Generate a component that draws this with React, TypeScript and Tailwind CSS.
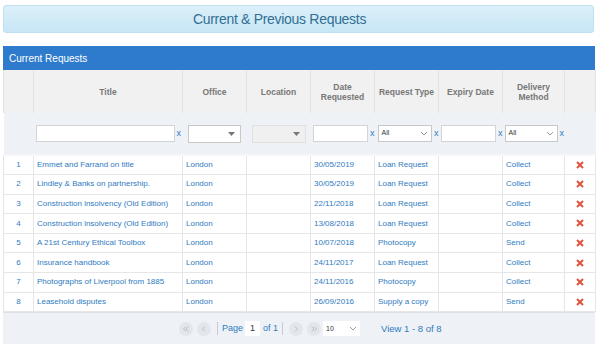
import React from 'react';

const rows = [
  ['Emmet and Farrand on title', '30/05/2019', 'Loan Request', 'Collect'],
  ['Lindley & Banks on partnership.', '30/05/2019', 'Loan Request', 'Collect'],
  ['Construction insolvency (Old Edition)', '22/11/2018', 'Loan Request', 'Collect'],
  ['Construction insolvency (Old Edition)', '13/08/2018', 'Loan Request', 'Collect'],
  ['A 21st Century Ethical Toolbox', '10/07/2018', 'Photocopy', 'Send'],
  ['Insurance handbook', '24/11/2017', 'Loan Request', 'Collect'],
  ['Photographs of Liverpool from 1885', '24/11/2016', 'Photocopy', 'Collect'],
  ['Leasehold disputes', '26/09/2016', 'Supply a copy', 'Send'],
];

const Chevron = () => (
  <svg width="8" height="5" viewBox="0 0 8 5" className="shrink-0">
    <path d="M1 1l3 3 3-3" fill="none" stroke="#999" strokeWidth="1" />
  </svg>
);

const Caret = () => (
  <svg width="7" height="4" viewBox="0 0 7 4" className="shrink-0">
    <path d="M0 0h7L3.5 4z" fill="#777" />
  </svg>
);

const X = () => <span className="text-[9px] leading-none text-[#2f7bbf] ml-[2px]">x</span>;

// little round pager buttons, drawn chevrons
const PagerBtn = ({ d }: { d: string }) => (
  <div className="w-[14px] h-[14px] rounded-full bg-[#e3e7eb] flex items-center justify-center">
    <svg width="8" height="8" viewBox="0 0 8 8">
      <path d={d} fill="none" stroke="#b9c0c8" strokeWidth="1" />
    </svg>
  </div>
);

const App = () => {
  return (
    <div className="w-[600px] h-[349px] bg-white overflow-hidden font-['Liberation_Sans',Arial,sans-serif] px-[3px] pt-[5px]">
      <div className="h-[28px] w-[591px] rounded-[3px] border border-[#bfe0f1] bg-gradient-to-b from-[#dcf0fa] to-[#c7e6f5] flex items-center justify-center pr-[38px] text-[14px] tracking-[-0.3px] text-[#326f93]">
        Current &amp; Previous Requests
      </div>

      <div className="mt-[13px] w-[592px]">
        <div className="h-[24px] bg-[#2e7bcd] flex items-center pl-[6px] text-[10px] text-white">
          Current Requests
        </div>

        <table className="table-fixed border-collapse w-[592px] text-[8px]">
          <colgroup>
            <col className="w-[30px]" />
            <col className="w-[149px]" />
            <col className="w-[64px]" />
            <col className="w-[64px]" />
            <col className="w-[64px]" />
            <col className="w-[64px]" />
            <col className="w-[64px]" />
            <col className="w-[62px]" />
            <col className="w-[31px]" />
          </colgroup>
          <thead>
            <tr className="h-[43px] bg-[#f1f1f1] text-[#777] font-bold">
              {['', 'Title', 'Office', 'Location', 'Date Requested', 'Request Type', 'Expiry Date', 'Delivery Method', ''].map((h, i) => (
                <th key={i} className="border-x border-[#e2e2e2] px-[2px] font-bold text-[8.5px] leading-[10px] text-center whitespace-nowrap">
                  {h === 'Date Requested' ? (
                    <>Date<br />Requested</>
                  ) : h === 'Delivery Method' ? (
                    <>Delivery<br />Method</>
                  ) : (
                    h
                  )}
                </th>
              ))}
            </tr>
            <tr className="h-[42px] bg-[#eef2f7]">
              <td />
              <td className="pl-[2px]">
                <div className="flex items-center">
                  <div className="w-[139px] h-[17px] bg-white border border-[#d4d4d4]" />
                  <X />
                </div>
              </td>
              <td className="pl-[5px]">
                <div className="w-[53px] h-[18px] bg-white border border-[#c8c8c8] flex items-center justify-end pr-[5px]">
                  <Caret />
                </div>
              </td>
              <td className="pl-[5px]">
                <div className="w-[54px] h-[18px] bg-[#f0f0f0] border border-[#e0e0e0] flex items-center justify-end pr-[5px]">
                  <Caret />
                </div>
              </td>
              <td className="pl-[2px]">
                <div className="flex items-center">
                  <div className="w-[57px] h-[17px] bg-white border border-[#d4d4d4]" />
                  <X />
                </div>
              </td>
              <td className="pl-[3px]">
                <div className="flex items-center">
                  <div className="w-[56px] h-[17px] bg-white border border-[#c8c8c8] flex items-center justify-between px-[3px] text-[7px] text-[#333]">
                    All
                    <Chevron />
                  </div>
                  <X />
                </div>
              </td>
              <td className="pl-[2px]">
                <div className="flex items-center">
                  <div className="w-[57px] h-[17px] bg-white border border-[#d4d4d4]" />
                  <X />
                </div>
              </td>
              <td className="pl-[2px]" colSpan={2}>
                <div className="flex items-center">
                  <div className="w-[53px] h-[17px] bg-white border border-[#c8c8c8] flex items-center justify-between px-[3px] text-[7px] text-[#333]">
                    All
                    <Chevron />
                  </div>
                  <X />
                </div>
              </td>
            </tr>
          </thead>
          <tbody className="text-[#2f7bbf] border-t-2 border-[#f6f6f6]">
            {rows.map((r, i) => (
              <tr key={i} className="h-[19.6px] border-b border-[#e6e6e6]">
                <td className="border-x border-[#e6e6e6] text-center">{i + 1}</td>
                <td className="border-x border-[#e6e6e6] pl-[3px] whitespace-nowrap">{r[0]}</td>
                <td className="border-x border-[#e6e6e6] pl-[3px]">London</td>
                <td className="border-x border-[#e6e6e6]" />
                <td className="border-x border-[#e6e6e6] pl-[3px]">{r[1]}</td>
                <td className="border-x border-[#e6e6e6] pl-[3px]">{r[2]}</td>
                <td className="border-x border-[#e6e6e6]" />
                <td className="border-x border-[#e6e6e6] pl-[3px]">{r[3]}</td>
                <td className="border-x border-[#e6e6e6] text-center">
                  <svg width="8" height="8" viewBox="0 0 8 8" className="inline-block">
                    <path d="M1 1l6 6M7 1l-6 6" stroke="#e0533c" strokeWidth="2" />
                  </svg>
                </td>
              </tr>
            ))}
          </tbody>
        </table>

        <div className="h-[32px] bg-[#eef1f5] border-t border-[#dde1e6] flex items-center text-[#2f7bbf] text-[9px]">
          <div className="ml-[176px] flex items-center">
            <PagerBtn d="M4 1.5L1.5 4 4 6.5M6.5 1.5L4 4l2.5 2.5" />
            <div className="ml-[4px]">
              <PagerBtn d="M5 1.5L2.5 4 5 6.5" />
            </div>
            <div className="ml-[6px] w-px h-[13px] bg-[#c6ccd3]" />
            <span className="ml-[4px]">Page</span>
            <div className="ml-[2px] w-[15px] h-[15px] bg-white flex items-center justify-center text-[#333]">1</div>
            <span className="ml-[3px]">of 1</span>
            <div className="ml-[4px] w-px h-[13px] bg-[#c6ccd3]" />
            <div className="ml-[6px]">
              <PagerBtn d="M3 1.5L5.5 4 3 6.5" />
            </div>
            <div className="ml-[4px]">
              <PagerBtn d="M1.5 1.5L4 4 1.5 6.5M4 1.5L6.5 4 4 6.5" />
            </div>
            <div className="ml-[2px] w-[37px] h-[15px] bg-white flex items-center justify-between px-[3px] text-[7px] text-[#333]">
              10
              <Chevron />
            </div>
            <span className="ml-[21px] text-[9.5px]">View 1 - 8 of 8</span>
          </div>
        </div>
      </div>
    </div>
  );
};

export default App;
